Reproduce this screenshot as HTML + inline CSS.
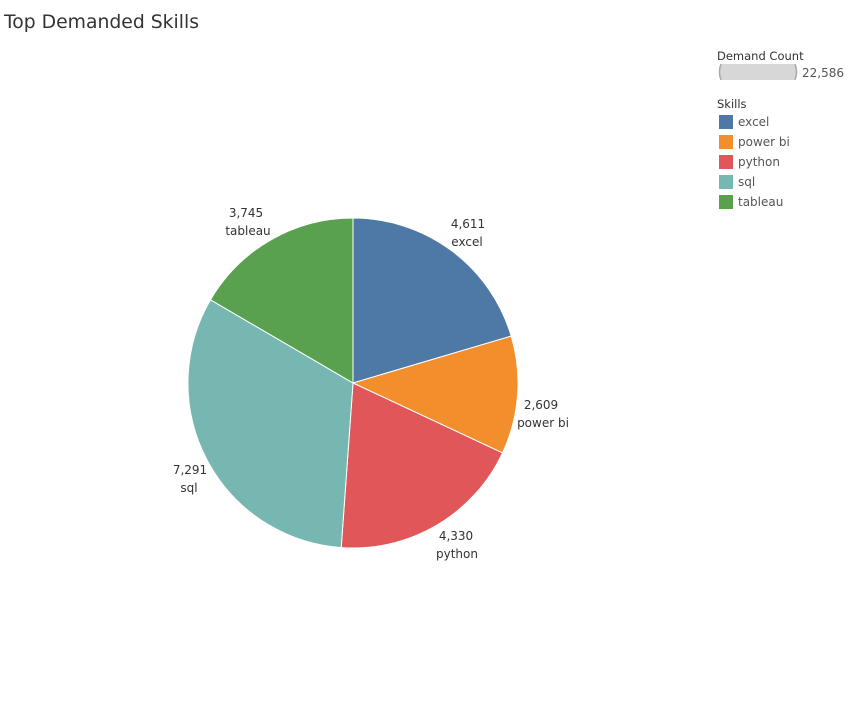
<!DOCTYPE html>
<html><head><meta charset="utf-8"><style>
html,body{margin:0;padding:0;background:#fff;width:856px;height:723px;overflow:hidden}
svg{display:block}
text{font-family:"DejaVu Sans","Liberation Sans",sans-serif}
</style></head><body>
<svg width="856" height="723" viewBox="0 0 856 723">
<text x="4" y="28" font-size="18.8" fill="#333" font-family="DejaVu Sans, sans-serif">Top Demanded Skills</text>
<g stroke="#fff" stroke-width="1">
<path d="M353,383 L353,218 A165,165 0 0 1 511.2,336.1 Z" fill="#4e79a7"/>
<path d="M353,383 L511.2,336.1 A165,165 0 0 1 502.5,452.9 Z" fill="#f28e2b"/>
<path d="M353,383 L502.5,452.9 A165,165 0 0 1 341.2,547.6 Z" fill="#e15759"/>
<path d="M353,383 L341.2,547.6 A165,165 0 0 1 210.5,299.8 Z" fill="#76b7b2"/>
<path d="M353,383 L210.5,299.8 A165,165 0 0 1 353,218 Z" fill="#59a14f"/>
</g>
<g font-size="12" fill="#333" text-anchor="middle">
<text x="468" y="228">4,611</text><text x="467" y="246">excel</text>
<text x="541" y="409">2,609</text><text x="543" y="427">power bi</text>
<text x="456" y="540">4,330</text><text x="457" y="558">python</text>
<text x="190" y="474">7,291</text><text x="189" y="492">sql</text>
<text x="246" y="217">3,745</text><text x="248" y="235">tableau</text>
</g>
<text x="717" y="60" font-size="11.5" fill="#333">Demand Count</text>
<rect x="719" y="64" width="78" height="16" rx="4" fill="#d7d7d7"/>
<path d="M721,64 Q718,72 721,80" stroke="#aaa" fill="none" stroke-width="1.5"/>
<path d="M795,64 Q798,72 795,80" stroke="#aaa" fill="none" stroke-width="1.5"/>
<text x="802" y="77" font-size="12" fill="#555">22,586</text>
<text x="717" y="108" font-size="11.5" fill="#333">Skills</text>
<g font-size="12" fill="#555">
<rect x="719" y="115" width="14" height="14" fill="#4e79a7"/><text x="738" y="126">excel</text>
<rect x="719" y="135" width="14" height="14" fill="#f28e2b"/><text x="738" y="146">power bi</text>
<rect x="719" y="155" width="14" height="14" fill="#e15759"/><text x="738" y="166">python</text>
<rect x="719" y="175" width="14" height="14" fill="#76b7b2"/><text x="738" y="186">sql</text>
<rect x="719" y="195" width="14" height="14" fill="#59a14f"/><text x="738" y="206">tableau</text>
</g>
</svg>
</body></html>
